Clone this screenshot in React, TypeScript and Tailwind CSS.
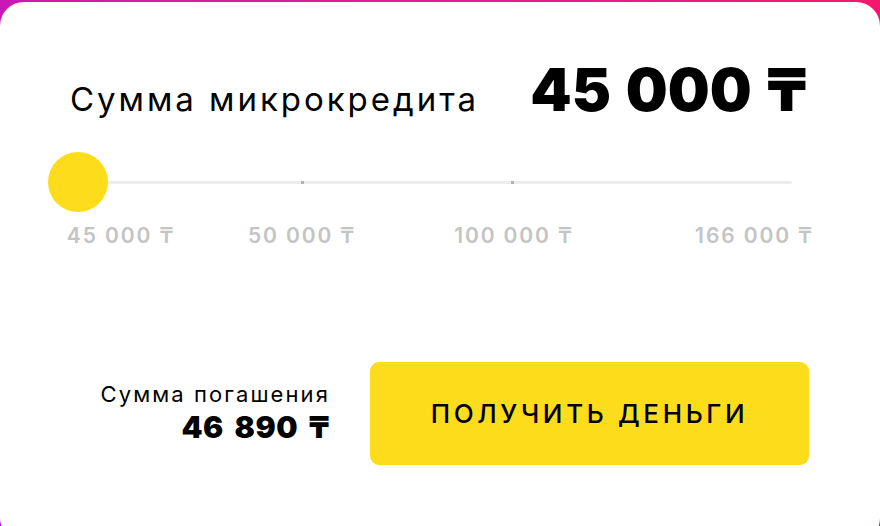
import React from "react";

const FONT = "font-['Inter','Noto_Sans','DejaVu_Sans',sans-serif]";

type Mark = { label: string };

const marks: Mark[] = [
  { label: "45 000 ₸" },
  { label: "50 000 ₸" },
  { label: "100 000 ₸" },
  { label: "166 000 ₸" },
];

function Slider() {
  return (
    <div className="relative ml-[48px] mt-[30px] h-[60px] w-[744px]">
      {/* track */}
      <div className="absolute inset-x-0 top-[29px] h-[3px] rounded-full bg-[#ececec]" />
      {/* step ticks */}
      <div className="absolute left-[253px] top-[29px] h-[3px] w-[3px] bg-[#b4b4b4]" />
      <div className="absolute left-[463px] top-[29px] h-[3px] w-[3px] bg-[#b4b4b4]" />
      {/* handle */}
      <div className="absolute left-0 top-0 h-[60px] w-[60px] rounded-full bg-[#fddc1c]" />
    </div>
  );
}

export default function App() {
  return (
    <div
      className={`${FONT} h-[526px] w-[880px] overflow-hidden bg-[linear-gradient(60deg,#a010e4_0%,#d81ba6_35%,#e81a8c_65%,#f2186c_100%)] pt-[2px]`}
    >
      <div className="flex h-[540px] w-[880px] flex-col rounded-[24px] bg-white text-black">
        {/* heading row */}
        <div className="mt-[56px] flex items-baseline justify-between pl-[70px] pr-[73px]">
          <span className="text-[33px] leading-[32px] font-normal tracking-[0.09em]">
            Сумма микрокредита
          </span>
          <span className="text-[59px] leading-[64px] font-black [word-spacing:3px]">
            45 000 ₸
          </span>
        </div>

        <Slider />

        {/* scale labels */}
        <div className="mt-[13px] ml-[40px] grid grid-cols-[162px_200px_224px_257px] text-[21px] leading-[21px] font-semibold tracking-[0.09em] text-[#c4c4c4]">
          {marks.map((m) => (
            <span key={m.label} className="text-center whitespace-nowrap">
              {m.label}
            </span>
          ))}
        </div>

        {/* total + action */}
        <div className="mt-[116px] flex items-start">
          <div className="mt-[17px] w-[330px] shrink-0 text-right">
            <div className="text-[22px] leading-[30px] font-normal tracking-[0.095em]">
              Сумма погашения
            </div>
            <div className="mt-[2px] text-[30px] leading-[32px] font-black tracking-[0.02em] [word-spacing:4px]">
              46 890 ₸
            </div>
          </div>
          <button className="ml-[40px] flex h-[103px] w-[439px] items-center justify-center rounded-[9px] bg-[#fddc1c] text-[26px] font-medium tracking-[0.14em] text-black">
            ПОЛУЧИТЬ ДЕНЬГИ
          </button>
        </div>
      </div>
    </div>
  );
}
